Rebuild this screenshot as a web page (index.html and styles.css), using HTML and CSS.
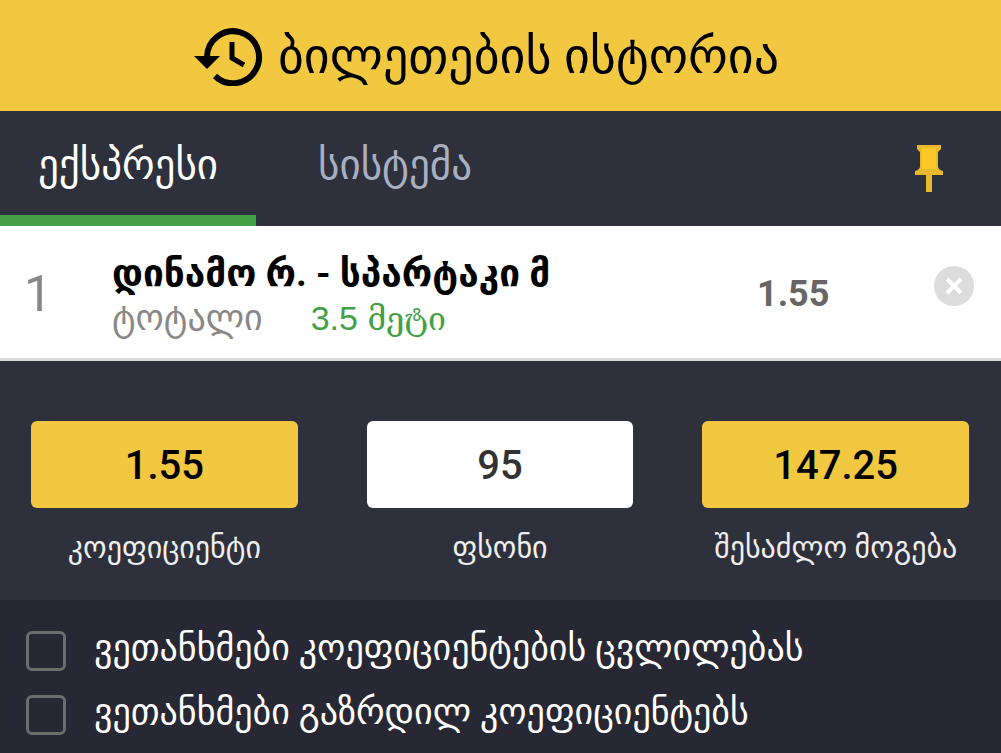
FILE: index.html
```html
<!DOCTYPE html>
<html lang="ka">
	<head>
		<meta charset="utf-8">
		<meta name="viewport" content="width=device-width, initial-scale=1">
		<title>ბილეთების ისტორია</title>
		<link rel="stylesheet" href="styles.css">
	</head>
	<body>
		<header class="head">
			<svg class="head-icon" viewBox="0 0 70 60" aria-hidden="true">
				<path d="M13 31 A26 26 0 1 1 21 50" fill="none" stroke="#000" stroke-width="6"/>
				<path d="M0 30H26L13 43Z"/>
				<path d="M38 16V32L50 39" fill="none" stroke="#000" stroke-width="5"/>
			</svg>
			<h1>ბილეთების ისტორია</h1>
		</header>
		<nav class="tabs">
			<button type="button" class="tab current">ექსპრესი</button>
			<button type="button" class="tab">სისტემა</button>
			<button type="button" class="pin" aria-label="მიმაგრება">
				<svg viewBox="0 0 30 48" width="30" height="48">
					<path d="M3 0H27V4L24 7V22Q25 25 29 26V30H18V47H12V30H1V26Q5 25 6 22V7L3 4Z" fill="#e8b92c"/>
					<path d="M8 3H22V24H8Z" fill="#ffc928"/>
				</svg>
			</button>
		</nav>
		<main>
			<section class="bet">
				<span class="num">1</span>
				<div class="info">
					<h2>დინამო რ. - სპარტაკი მ</h2>
					<p><span class="market">ტოტალი</span><span class="pick">3.5 <span class="more">მეტი</span></span></p>
				</div>
				<span class="odd">1.55</span>
				<button type="button" class="close" aria-label="წაშლა">
					<svg viewBox="0 0 40 40" width="40" height="40">
						<circle cx="20" cy="20" r="20" fill="#dcdcdc"/>
						<path d="M13 13L27 27M27 13L13 27" stroke="#fff" stroke-width="4"/>
					</svg>
				</button>
			</section>
			<section class="sum">
				<div class="item">
					<output class="box" id="koef">1.55</output>
					<label for="koef">კოეფიციენტი</label>
				</div>
				<div class="item">
					<input class="box stake" id="stake" type="text" value="95">
					<label for="stake">ფსონი</label>
				</div>
				<div class="item">
					<output class="box" id="win">147.25</output>
					<label for="win">შესაძლო მოგება</label>
				</div>
			</section>
			<section class="agree">
				<label><input type="checkbox"><span>ვეთანხმები კოეფიციენტების ცვლილებას</span></label>
				<label><input type="checkbox"><span>ვეთანხმები გაზრდილ კოეფიციენტებს</span></label>
			</section>
		</main>
	</body>
</html>
```

FILE: styles.css
```css
*{
	box-sizing: border-box;
	margin: 0;
	padding: 0;
}
body{
	background-color: #272834;
	font-family: Roboto, "DejaVu Sans", sans-serif;
	color: #000;
}
button{
	border: 0;
	background: none;
	font-family: inherit;
	cursor: pointer;
}
svg{
	display: block;
}
.head{
	display: flex;
	align-items: center;
	justify-content: center;
	gap: 14px;
	padding: 0 28px 0 0;
	height: 111px;
	background-color: #f2c840;
}
.head-icon{
	width: 70px;
	height: 60px;
}
.head h1{
	font-size: 50px;
	font-weight: 400;
	line-height: 60px;
}
.tabs{
	display: flex;
	height: 115px;
	background-color: #2e303c;
}
.tab{
	padding: 4px 36px 0 62px;
	font-size: 41px;
	color: #a9aec1;
	border-bottom: 11px solid transparent;
}
.tab.current{
	width: 256px;
	padding: 4px 36px 0;
	color: #fff;
	border-bottom-color: #43a047;
}
.pin{
	margin-left: auto;
	padding: 0 57px;
}
.bet{
	display: flex;
	align-items: center;
	height: 135px;
	padding-top: 4px;
	background-color: #fff;
	border-bottom: 3px solid #dcdbd9;
}
.num{
	width: 112px;
	padding-left: 24px;
	font-size: 50px;
	color: #888;
}
.info{
	flex: 1;
	padding-top: 4px;
}
.info h2{
	font-size: 37px;
	line-height: 44px;
	font-weight: 700;
}
.info p{
	display: flex;
	gap: 48px;
	font-size: 36px;
	line-height: 44px;
	color: #888;
}
.pick{
	font-family: "Liberation Sans", sans-serif;
	font-size: 34px;
	color: #43a047;
}
.more{
	font-family: "DejaVu Serif", serif;
	font-size: 32px;
}
.odd{
	width: 177px;
	font-size: 36px;
	font-weight: 700;
	color: #666;
}
.close{
	align-self: flex-start;
	width: 67px;
	padding-top: 36px;
}
.sum{
	display: flex;
	gap: 69px;
	height: 239px;
	padding: 60px 32px 0 31px;
	background-color: #2e303c;
}
.item{
	flex: 1;
	min-width: 0;
	display: flex;
	flex-direction: column;
	align-items: center;
	gap: 20px;
}
.box{
	width: 100%;
	height: 87px;
	padding-top: 2px;
	border: 0;
	border-radius: 6px;
	background-color: #f2c840;
	font-family: Roboto, sans-serif;
	font-size: 40px;
	font-weight: 500;
	line-height: 86px;
	text-align: center;
}
.stake{
	background-color: #fff;
	color: #333;
}
.item label{
	font-size: 30px;
	line-height: 40px;
	color: #eee;
	white-space: nowrap;
}
.agree{
	display: flex;
	flex-direction: column;
	gap: 16px;
	padding: 24px 26px 16px;
}
.agree label{
	display: flex;
	align-items: center;
	gap: 28px;
	font-size: 36px;
	line-height: 48px;
	color: #fff;
	white-space: nowrap;
}
.agree input{
	appearance: none;
	width: 40px;
	height: 40px;
	margin-top: 6px;
	border: 3px solid #6d6d6b;
	border-radius: 6px;
}
```
